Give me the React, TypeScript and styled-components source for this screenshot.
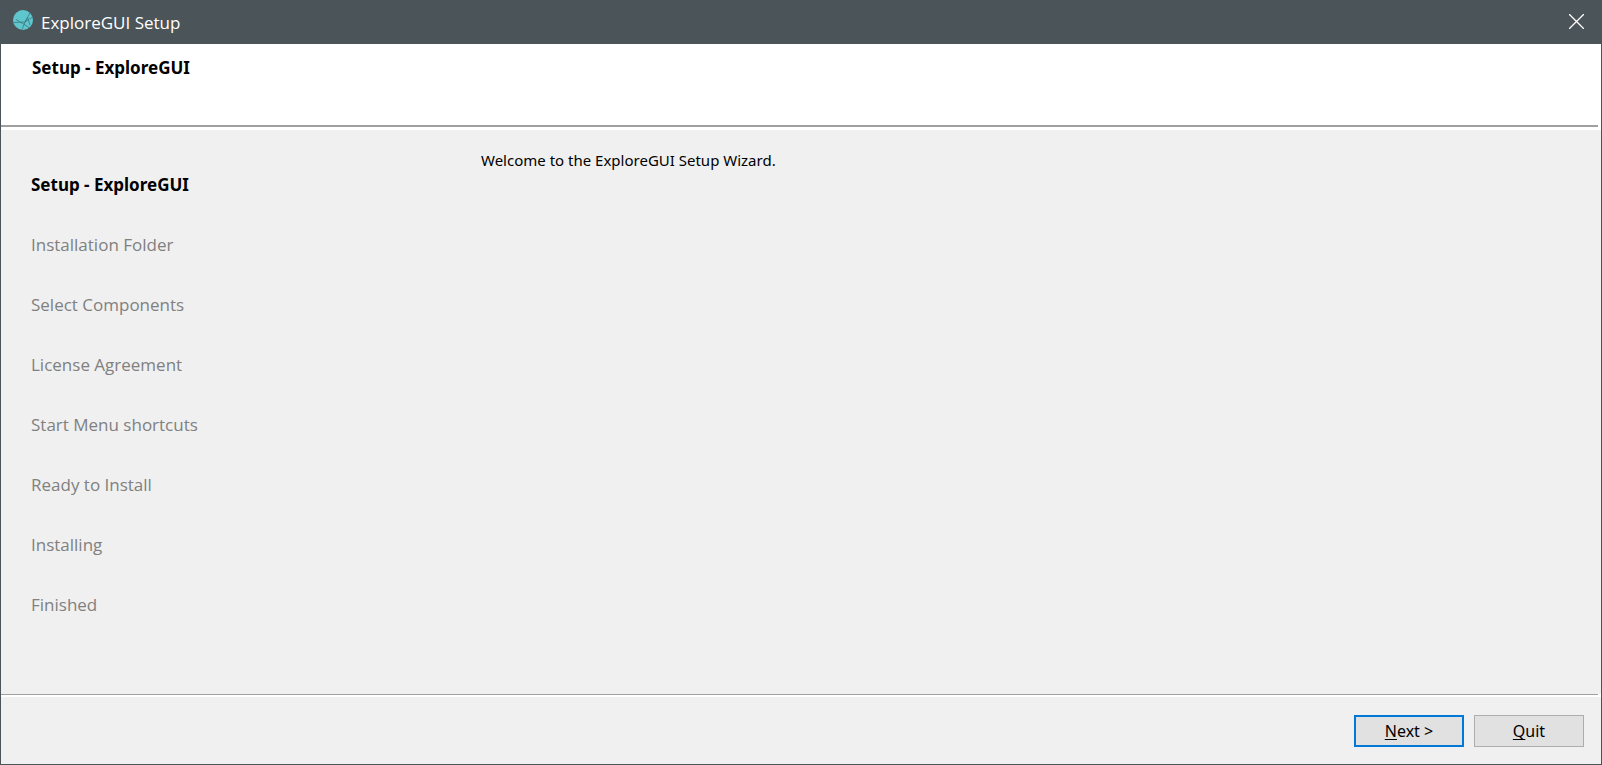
import React, { useState } from "react";
import styled, { createGlobalStyle } from "styled-components";

const GlobalStyle = createGlobalStyle`
  *, *::before, *::after { box-sizing: border-box; }
  body { margin: 0; background: #f0f0f0; }
  button { font: inherit; }
`;

const sans = `"Noto Sans", "Open Sans", sans-serif`;
const openSans = `"Open Sans", "Noto Sans", sans-serif`;

const Window = styled.div`
  display: flex;
  flex-direction: column;
  min-height: 100vh;
  border: solid #4b5459;
  border-width: 0 1px 1px;
  background: #f0f0f0;
  color: #000;
  font: 16px/24px ${sans};
`;

const TitleBar = styled.header`
  display: flex;
  align-items: center;
  height: 44px;
  padding-left: 12px;
  background: #4b5459;
  color: #fff;
`;

const AppIcon = styled.svg`
  width: 20px;
  height: 20px;
  margin-bottom: 4px;
`;

const WindowTitle = styled.span`
  flex: 1;
  padding: 2px 0 0 8px;
  font: 17px/24px ${openSans};
`;

const CloseButton = styled.button`
  display: grid;
  place-items: center;
  width: 50px;
  height: 42px;
  margin-bottom: 2px;
  padding: 0;
  border: 0;
  background: transparent;
  color: #fff;
`;

const PageHeader = styled.div`
  height: 81px;
  padding: 12px 31px;
  background: #fff;
`;

const PageTitle = styled.h1`
  margin: 0;
  font: bold 17px/24px ${sans};
`;

const Rule = styled.div<{ $weight: number; $light: number }>`
  padding: 0 3px ${(p) => p.$light}px 0;
  background: #fff;

  &::before {
    content: "";
    display: block;
    height: ${(p) => p.$weight}px;
    background: #a0a0a0;
  }
`;

const Body = styled.div`
  display: flex;
  flex: 1;
`;

const Steps = styled.ol`
  display: flex;
  flex-direction: column;
  gap: 36px;
  width: 449px;
  margin: 0;
  padding: 43px 30px;
  list-style: none;
`;

const Step = styled.li<{ $current: boolean }>`
  color: ${(p) => (p.$current ? "#000" : "#808080")};
  font: ${(p) => (p.$current ? "bold" : "normal")} 17px/24px ${(p) => (p.$current ? sans : openSans)};
`;

const Content = styled.main`
  flex: 1;
  padding: 18px 31px;
  font-size: 15px;

  p { margin: 0; }
`;

const Footer = styled.footer`
  display: flex;
  justify-content: flex-end;
  gap: 10px;
  padding: 18px 17px 17px;
`;

const PushButton = styled.button<{ $primary?: boolean }>`
  width: 110px;
  height: 32px;
  padding: 0;
  border: ${(p) => (p.$primary ? "2px solid #0078d7" : "1px solid #adadad")};
  background: #e1e1e1;
  color: #000;

  u { text-underline-offset: 2px; text-decoration-thickness: 1px; text-decoration-skip-ink: none; }
`;

const STEPS = [
  "Setup - ExploreGUI",
  "Installation Folder",
  "Select Components",
  "License Agreement",
  "Start Menu shortcuts",
  "Ready to Install",
  "Installing",
  "Finished",
];

export default function App() {
  const [current] = useState(0);

  return (
    <Window>
      <GlobalStyle />
      <TitleBar>
        <AppIcon viewBox="0 0 20 20" aria-hidden="true">
          <circle cx="10" cy="10" r="10" fill="#5fc6cd" />
          <path
            d="M1 12.5 L12 12 L19.5 7 M17 3 L12 12 L9 19.5 M3 9.5 L10.5 14 L16 17.5 M12 12 L14.5 7.5 L17 15"
            fill="none"
            stroke="#3b7880"
            strokeWidth="0.8"
          />
        </AppIcon>
        <WindowTitle>ExploreGUI Setup</WindowTitle>
        <CloseButton type="button" aria-label="Close">
          <svg width="15" height="15" viewBox="0 0 15 15" aria-hidden="true">
            <path d="M0 0 L15 15 M15 0 L0 15" stroke="currentColor" strokeWidth="1.3" />
          </svg>
        </CloseButton>
      </TitleBar>
      <PageHeader>
        <PageTitle>Setup - ExploreGUI</PageTitle>
      </PageHeader>
      <Rule $weight={2} $light={3} />
      <Body>
        <Steps>
          {STEPS.map((step, i) => (
            <Step key={step} $current={i === current} aria-current={i === current ? "step" : undefined}>
              {step}
            </Step>
          ))}
        </Steps>
        <Content>
          <p>Welcome to the ExploreGUI Setup Wizard.</p>
        </Content>
      </Body>
      <Rule $weight={1} $light={2} />
      <Footer>
        <PushButton type="button" $primary>
          <u>N</u>ext &gt;
        </PushButton>
        <PushButton type="button">
          <u>Q</u>uit
        </PushButton>
      </Footer>
    </Window>
  );
}
